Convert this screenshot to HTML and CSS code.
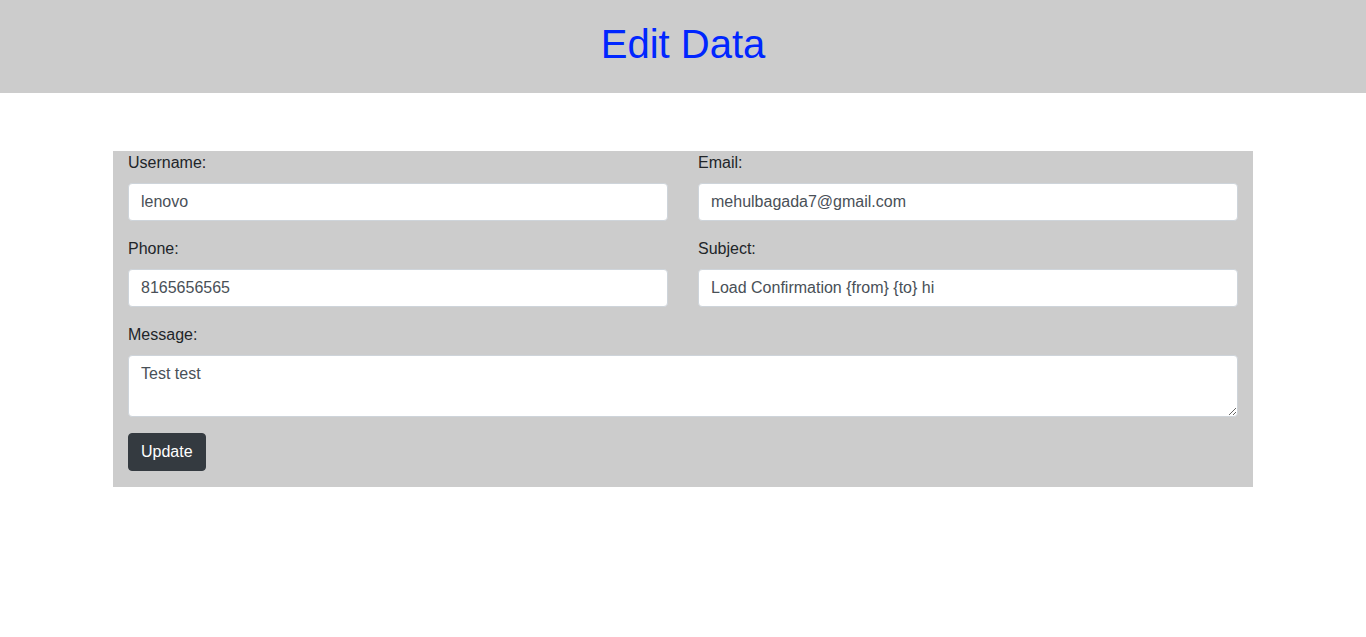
FILE: index.html
```html
<!DOCTYPE html>
<html lang="en">
<head>
<meta charset="utf-8">
<title>Edit Data</title>
<link rel="stylesheet" href="styles.css">
</head>
<body>
<header class="page-header">
  <h1 class="page-title">Edit Data</h1>
</header>
<main class="container">
  <form class="edit-form">
    <div class="row">
      <div class="form-group">
        <label class="form-label" for="username">Username:</label>
        <input class="form-control" id="username" type="text" value="lenovo">
      </div>
      <div class="form-group">
        <label class="form-label" for="email">Email:</label>
        <input class="form-control" id="email" type="text" value="mehulbagada7@gmail.com">
      </div>
      <div class="form-group">
        <label class="form-label" for="phone">Phone:</label>
        <input class="form-control" id="phone" type="text" value="8165656565">
      </div>
      <div class="form-group">
        <label class="form-label" for="subject">Subject:</label>
        <input class="form-control" id="subject" type="text" value="Load Confirmation {from} {to} hi">
      </div>
      <div class="form-group full">
        <label class="form-label" for="message">Message:</label>
        <textarea class="form-control textarea" id="message" rows="2">Test test</textarea>
      </div>
    </div>
    <button class="btn-dark" type="button">Update</button>
  </form>
</main>
</body>
</html>
```
FILE: styles.css
```css
* { box-sizing: border-box; }
html, body {
  margin: 0;
  padding: 0;
  background: #fff;
  font-family: "Liberation Sans", Arial, sans-serif;
  font-size: 16px;
  line-height: 1.5;
  color: #212529;
}
.page-header {
  background: #cccccc;
  height: 93px;
  padding-top: 20px;
  text-align: center;
}
.page-title {
  margin: 0;
  font-size: 40px;
  font-weight: 400;
  line-height: 48px;
  color: #0026ff;
}
.container {
  width: 1140px;
  margin: 58px auto 0;
}
.edit-form {
  background: #cccccc;
  padding: 0 15px 16px;
}
.row {
  display: grid;
  grid-template-columns: 1fr 1fr;
  column-gap: 30px;
}
.form-group {
  display: flex;
  flex-direction: column;
  margin-bottom: 16px;
}
.form-group.full { grid-column: 1 / -1; }
.form-label {
  display: block;
  margin-bottom: 8px;
  line-height: 24px;
}
.form-control {
  display: block;
  width: 100%;
  height: 38px;
  padding: 6px 12px;
  font-family: inherit;
  font-size: 16px;
  line-height: 24px;
  color: #495057;
  background: #fff;
  border: 1px solid #ced4da;
  border-radius: 4px;
  margin: 0;
  outline: none;
}
.textarea {
  height: 62px;
  resize: vertical;
}
.btn-dark {
  display: block;
  height: 38px;
  padding: 6px 12px;
  font-family: inherit;
  font-size: 16px;
  line-height: 24px;
  color: #fff;
  background: #343a40;
  border: 1px solid #343a40;
  border-radius: 4px;
  margin: 0;
}
```
